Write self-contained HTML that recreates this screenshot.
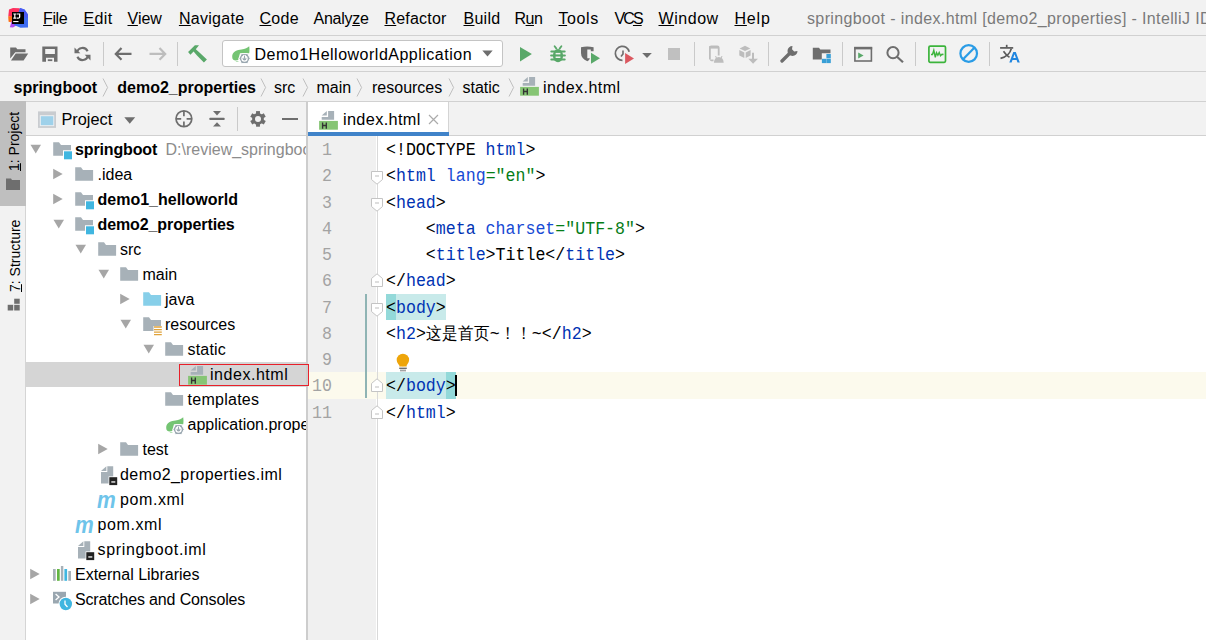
<!DOCTYPE html>
<html><head><meta charset="utf-8"><style>
html,body{margin:0;padding:0;}
body{width:1206px;height:640px;position:relative;overflow:hidden;background:#f2f2f2;font-family:'Liberation Sans', sans-serif;}
u{text-decoration-thickness:1px;text-underline-offset:1px}
</style></head><body>
<div style="position:absolute;left:0px;top:35px;width:1206px;height:1px;background:#d1d1d1;"></div><svg style="position:absolute;left:4px;top:4px" width="30" height="30" viewBox="0 0 30 30">
<polygon points="5,5.5 9,4 15.5,4.2 18,8 9,13 4.3,12.3" fill="#fe2f5e"/>
<polygon points="4.2,12.3 8.3,12.3 8.3,18.6 4.6,17.7" fill="#fe6f17"/>
<polygon points="8.3,15 13,21 9,23.5 5.8,23.3" fill="#b04af0"/>
<polygon points="16,4 20.5,5.5 24,10.5 24,23.5 16.5,23.8 10,21" fill="#3e6cf1"/>
<polygon points="16,4 20.5,5.5 24,10.5 24,14 16,12" fill="#4a5af4"/>
<rect x="8" y="8" width="12" height="12" fill="#000"/>
<path d="M9.3,9.5 H12.3 V10.6 H11.4 V13.6 H12.3 V14.7 H9.3 V13.6 H10.2 V10.6 H9.3 Z" fill="#fff"/>
<path d="M12.8,9.5 H16.3 V13 Q16.3,14.8 14.3,14.8 H12.8 V13.6 H14.3 Q15,13.6 15,13 V10.6 H12.8 Z" fill="#fff"/>
<rect x="9.2" y="17" width="5.3" height="1.1" fill="#fff"/>
</svg><div style="position:absolute;left:43.1px;top:11.46px;font-family:'Liberation Sans', sans-serif;font-size:16px;line-height:16px;color:#000;font-weight:400;white-space:pre;letter-spacing:-0.45px"><u style="text-decoration-thickness:1px;text-underline-offset:1px">F</u>ile</div><div style="position:absolute;left:83.6px;top:11.46px;font-family:'Liberation Sans', sans-serif;font-size:16px;line-height:16px;color:#000;font-weight:400;white-space:pre;letter-spacing:0.3px"><u style="text-decoration-thickness:1px;text-underline-offset:1px">E</u>dit</div><div style="position:absolute;left:127.5px;top:11.46px;font-family:'Liberation Sans', sans-serif;font-size:16px;line-height:16px;color:#000;font-weight:400;white-space:pre;letter-spacing:0px"><u style="text-decoration-thickness:1px;text-underline-offset:1px">V</u>iew</div><div style="position:absolute;left:178.9px;top:11.46px;font-family:'Liberation Sans', sans-serif;font-size:16px;line-height:16px;color:#000;font-weight:400;white-space:pre;letter-spacing:0.3px"><u style="text-decoration-thickness:1px;text-underline-offset:1px">N</u>avigate</div><div style="position:absolute;left:259.5px;top:11.46px;font-family:'Liberation Sans', sans-serif;font-size:16px;line-height:16px;color:#000;font-weight:400;white-space:pre;letter-spacing:0.27px"><u style="text-decoration-thickness:1px;text-underline-offset:1px">C</u>ode</div><div style="position:absolute;left:313.5px;top:11.46px;font-family:'Liberation Sans', sans-serif;font-size:16px;line-height:16px;color:#000;font-weight:400;white-space:pre;letter-spacing:-0.27px">Analy<u style="text-decoration-thickness:1px;text-underline-offset:1px">z</u>e</div><div style="position:absolute;left:384.5px;top:11.46px;font-family:'Liberation Sans', sans-serif;font-size:16px;line-height:16px;color:#000;font-weight:400;white-space:pre;letter-spacing:0.2px"><u style="text-decoration-thickness:1px;text-underline-offset:1px">R</u>efactor</div><div style="position:absolute;left:463.5px;top:11.46px;font-family:'Liberation Sans', sans-serif;font-size:16px;line-height:16px;color:#000;font-weight:400;white-space:pre;letter-spacing:0.27px"><u style="text-decoration-thickness:1px;text-underline-offset:1px">B</u>uild</div><div style="position:absolute;left:514.5px;top:11.46px;font-family:'Liberation Sans', sans-serif;font-size:16px;line-height:16px;color:#000;font-weight:400;white-space:pre;letter-spacing:-0.5px">R<u style="text-decoration-thickness:1px;text-underline-offset:1px">u</u>n</div><div style="position:absolute;left:558.5px;top:11.46px;font-family:'Liberation Sans', sans-serif;font-size:16px;line-height:16px;color:#000;font-weight:400;white-space:pre;letter-spacing:0.6px"><u style="text-decoration-thickness:1px;text-underline-offset:1px">T</u>ools</div><div style="position:absolute;left:614.5px;top:11.46px;font-family:'Liberation Sans', sans-serif;font-size:16px;line-height:16px;color:#000;font-weight:400;white-space:pre;letter-spacing:-1.9px">VC<u style="text-decoration-thickness:1px;text-underline-offset:1px">S</u></div><div style="position:absolute;left:658.5px;top:11.46px;font-family:'Liberation Sans', sans-serif;font-size:16px;line-height:16px;color:#000;font-weight:400;white-space:pre;letter-spacing:0.54px"><u style="text-decoration-thickness:1px;text-underline-offset:1px">W</u>indow</div><div style="position:absolute;left:734.5px;top:11.46px;font-family:'Liberation Sans', sans-serif;font-size:16px;line-height:16px;color:#000;font-weight:400;white-space:pre;letter-spacing:0.8px"><u style="text-decoration-thickness:1px;text-underline-offset:1px">H</u>elp</div><div style="position:absolute;left:807px;top:11.46px;font-family:'Liberation Sans', sans-serif;font-size:16px;line-height:16px;color:#7a7a7a;font-weight:400;white-space:pre;letter-spacing:0.37px">springboot - index.html [demo2_properties] - IntelliJ IDEA</div><div style="position:absolute;left:0px;top:71px;width:1206px;height:1px;background:#d1d1d1;"></div><svg style="position:absolute;left:10px;top:47px" width="19" height="14" viewBox="0 0 19 14"><path d="M0.2,0.5 H6 L7.3,2.2 H15.5 V5.2 H5.3 L0.2,11.5 Z" fill="#6e6e6e"/><path d="M1,13.4 L5.7,6.6 H18.2 L13.6,13.4 Z" fill="#6e6e6e"/></svg><svg style="position:absolute;left:42px;top:46px" width="16" height="16" viewBox="0 0 16 16"><path d="M0.3,0.5 H15.5 V15.8 H12 V11.7 H4 V15.8 H0.3 Z M3.2,3 V8 H12.9 V3 Z" fill="#6e6e6e" fill-rule="evenodd"/><rect x="5.8" y="13.3" width="4.5" height="1.8" fill="#6e6e6e"/></svg><svg style="position:absolute;left:74px;top:46px" width="17" height="16" viewBox="0 0 17 16"><path d="M3,6.5 A5.6,5.6 0 0 1 13.6,5.2" stroke="#6e6e6e" stroke-width="2.1" fill="none"/><path d="M14,9.5 A5.6,5.6 0 0 1 3.4,10.8" stroke="#6e6e6e" stroke-width="2.1" fill="none"/><polygon points="0.5,1.5 0.5,7.3 6.3,7.3" fill="#6e6e6e"/><polygon points="16.5,14.5 16.5,8.7 10.7,8.7" fill="#6e6e6e"/></svg><div style="position:absolute;left:103px;top:42px;width:1px;height:24px;background:#cacaca;"></div><svg style="position:absolute;left:114px;top:47px" width="19" height="14" viewBox="0 0 19 14"><path d="M7.5,1 L1.8,6.9 L7.5,12.8 M1.8,6.9 H17.5" stroke="#6e6e6e" stroke-width="2.2" fill="none"/></svg><svg style="position:absolute;left:148px;top:47px" width="19" height="14" viewBox="0 0 19 14"><path d="M11.5,1 L17.2,6.9 L11.5,12.8 M17.2,6.9 H1.5" stroke="#bdbdbd" stroke-width="2.2" fill="none"/></svg><div style="position:absolute;left:177px;top:42px;width:1px;height:24px;background:#cacaca;"></div><svg style="position:absolute;left:184px;top:42px" width="28" height="24" viewBox="0 0 28 24"><path d="M4.1,10.1 L10.9,3.2 L15,3.2 L11.8,7.3 L16,11 L22.9,17.6 L19.9,20.4 L13,13.5 L9.6,9.4 L6.4,12.7 Z" fill="#59a869"/></svg><div style="position:absolute;left:222px;top:40px;width:281px;height:27px;background:#fff;box-sizing:border-box;border:1px solid #c4c4c4;border-radius:3px;"></div><svg style="position:absolute;left:230.5px;top:46px" width="21" height="20" viewBox="0 0 21 20"><path d="M1.2,11 C1,5.5 6.5,4 10.5,3.6 C14,3.2 16.8,1.8 18.2,0.3 C18.6,3 18.6,5.5 18.2,7.2 L9,7.3 L7.8,11.6 L7.2,14 C5,14.6 1.3,15 1.2,11 Z" fill="#74c473"/>
<path d="M4.5,15.2 C5.5,14.9 7,14.9 7.8,15.2 C7,15.6 5.5,15.6 4.5,15.2 Z" fill="#74c473"/>
<polygon points="10.4,7.6 16.6,7.6 19.2,12.3 16.6,17.6 10.4,17.6 8,12.3" fill="#9aa7b0" stroke="#fff" stroke-width="1"/>
<circle cx="13.5" cy="12.6" r="3.2" fill="#fff"/><circle cx="13.5" cy="12.6" r="1.9" fill="#9aa7b0"/>
<rect x="12.2" y="9" width="2.6" height="3.4" fill="#fff"/><rect x="13" y="9.6" width="1" height="3.2" fill="#9aa7b0"/></svg><div style="position:absolute;left:254.5px;top:46.96px;font-family:'Liberation Sans', sans-serif;font-size:16px;line-height:16px;color:#000;font-weight:400;white-space:pre;letter-spacing:0.5px">Demo1HelloworldApplication</div><svg style="position:absolute;left:482px;top:50px" width="11" height="7" viewBox="0 0 11 7"><polygon points="0.3,0.5 10.7,0.5 5.5,6.5" fill="#6e6e6e"/></svg><svg style="position:absolute;left:519px;top:46px" width="14" height="16" viewBox="0 0 14 16"><polygon points="1,0.9 1,15.4 12.9,7.9" fill="#59a869"/></svg><svg style="position:absolute;left:549px;top:45px" width="18" height="18" viewBox="0 0 18 18"><path d="M5.6,1.3 L7.4,3.6 M12.4,1.3 L10.6,3.6" stroke="#59a869" stroke-width="1.8" stroke-linecap="round"/>
<ellipse cx="9" cy="10.6" rx="5.1" ry="6.6" fill="#59a869"/>
<path d="M2.3,6.4 H15.7 M2.1,10.5 H15.9 M2.3,14.6 H15.7" stroke="#59a869" stroke-width="2" stroke-linecap="round"/>
<rect x="6.6" y="7.9" width="4.8" height="1.5" fill="#f2f2f2"/><rect x="6.6" y="11.5" width="4.8" height="1.5" fill="#f2f2f2"/></svg><svg style="position:absolute;left:576px;top:42px" width="26" height="24" viewBox="0 0 26 24"><path d="M5,5.3 Q11,3.6 17.6,5.3 V9.3 H14.8 V7.6 H11.3 V16.2 H13.9 Q13.5,18 11.4,19.3 Q5,16.5 5,11 Z" fill="#6e6e6e"/>
<polygon points="15,10.8 15,21.8 24,16.3" fill="#59a869"/></svg><svg style="position:absolute;left:614px;top:45px" width="21" height="20" viewBox="0 0 21 20"><path d="M15.2,6.8 A7,7 0 1 0 8.5,15.3" stroke="#6e6e6e" stroke-width="1.7" fill="none"/>
<path d="M9,5.5 V9 L7,11.5" stroke="#6e6e6e" stroke-width="1.6" fill="none"/>
<polygon points="11.1,7.9 11.1,18.9 20,13.4" fill="#db5860"/></svg><svg style="position:absolute;left:642px;top:52px" width="10" height="6" viewBox="0 0 10 6"><polygon points="0.2,0.9 9.8,0.9 5,5.9" fill="#6e6e6e"/></svg><div style="position:absolute;left:668px;top:48px;width:12px;height:12px;background:#c0c0c0;"></div><div style="position:absolute;left:694px;top:42px;width:1px;height:24px;background:#cacaca;"></div><svg style="position:absolute;left:704px;top:42px" width="60" height="24" viewBox="0 0 60 24"><path d="M5.9,17.6 V5.8 Q5.9,4.3 7.4,4.3 H13.2 Q14.7,4.3 14.7,5.8 V13.5" stroke="#bdbdbd" stroke-width="1.8" fill="none"/>
<rect x="5" y="4.3" width="9.7" height="2.3" fill="#bdbdbd"/>
<path d="M5.9,17.6 Q5.9,19.2 7.4,19.2 H9.5 V17.5 H5.9 Z" fill="#bdbdbd"/>
<path d="M9.9,20.7 Q10.3,15 14.8,14.9 Q19.3,15 19.7,20.7 Z" fill="#bdbdbd"/>
<path d="M11.6,14 L12.4,16 M18,14 L17.2,16" stroke="#bdbdbd" stroke-width="1"/>
<polygon points="41,3.8 46.3,6.4 41,9.1 35.6,6.4" fill="#bdbdbd"/>
<polygon points="35.3,7.9 40.3,10.5 40.3,16.1 35.3,13.6" fill="#bdbdbd"/>
<polygon points="41.7,10.5 46.6,7.9 46.6,13.6 41.7,16.1" fill="#bdbdbd"/>
<path d="M49,10.8 V17.5" stroke="#bdbdbd" stroke-width="2"/><polygon points="44.3,16.8 53.9,16.8 49.1,21.8" fill="#bdbdbd"/></svg><div style="position:absolute;left:768px;top:42px;width:1px;height:24px;background:#cacaca;"></div><svg style="position:absolute;left:780px;top:45px" width="19" height="18" viewBox="0 0 19 18"><path d="M2,16 L10,8" stroke="#6e6e6e" stroke-width="3.3" stroke-linecap="round"/>
<path d="M12.5,1 A5,5 0 1 0 17.5,6 L14.2,6.5 L12,4.3 Z" fill="#6e6e6e"/></svg><svg style="position:absolute;left:812px;top:47px" width="20" height="17" viewBox="0 0 20 17"><path d="M0.8,0.8 H7 L8.3,2.6 H18.5 V6.3 H9.8 V12.4 H0.8 Z" fill="#6e6e6e"/>
<rect x="14.4" y="7" width="4.4" height="4.3" fill="#389fd6"/><rect x="9.9" y="11.8" width="4.4" height="4.3" fill="#389fd6"/><rect x="14.4" y="11.8" width="4.4" height="4.3" fill="#389fd6"/></svg><div style="position:absolute;left:842px;top:42px;width:1px;height:24px;background:#cacaca;"></div><svg style="position:absolute;left:853px;top:46px" width="20" height="16" viewBox="0 0 20 16"><rect x="1.9" y="2" width="16.5" height="13" fill="none" stroke="#6e6e6e" stroke-width="1.6"/><rect x="1.1" y="0.8" width="18.1" height="2.6" fill="#6e6e6e"/>
<polygon points="5.2,6.4 5.2,12.4 10.6,9.4" fill="#59a869"/></svg><svg style="position:absolute;left:886px;top:45px" width="19" height="18" viewBox="0 0 19 18"><circle cx="7" cy="7.7" r="5.6" stroke="#6e6e6e" stroke-width="2" fill="none"/><path d="M11,11.8 L17,17.2" stroke="#6e6e6e" stroke-width="2.2"/></svg><div style="position:absolute;left:915px;top:42px;width:1px;height:24px;background:#cacaca;"></div><svg style="position:absolute;left:927px;top:45px" width="20" height="19" viewBox="0 0 20 19"><rect x="1.9" y="1.1" width="16.6" height="16.3" rx="1.3" fill="none" stroke="#3cb43c" stroke-width="1.7"/>
<path d="M4,9.5 L5.5,9.5 L6.8,5.3 L8.3,12.3 L9.5,7.7 L10.9,10.3 L12.2,7.5 L13.5,10.8 L15,9.2 L16.5,9.5" stroke="#3cb43c" stroke-width="1.4" fill="none"/></svg><svg style="position:absolute;left:959px;top:44px" width="20" height="20" viewBox="0 0 20 20"><circle cx="9.7" cy="9.5" r="8.3" stroke="#2a9ce6" stroke-width="2.2" fill="none"/><path d="M4.3,15 L15.1,4" stroke="#2a9ce6" stroke-width="2.2"/></svg><div style="position:absolute;left:989px;top:42px;width:1px;height:24px;background:#cacaca;"></div><svg style="position:absolute;left:996px;top:42px" width="26" height="24" viewBox="0 0 26 24"><path d="M10.7,2.8 V5" stroke="#5a5a5a" stroke-width="1.7"/>
<path d="M4.1,5.9 H17.2" stroke="#5a5a5a" stroke-width="1.7"/>
<path d="M15.3,6.6 C14,12 10,15 4.5,16.4" stroke="#5a5a5a" stroke-width="1.7" fill="none"/>
<path d="M7.5,9.3 C9.5,12 11,14 13.5,15.3" stroke="#5a5a5a" stroke-width="1.7" fill="none"/>
<path d="M13.3,20.6 L17.3,10.1 H19.8 L23.8,20.6 H21.5 L20.6,18 H16.5 L15.6,20.6 Z M17.2,16.1 H19.9 L18.55,12.2 Z" fill="#2086e0" fill-rule="evenodd"/></svg><div style="position:absolute;left:0px;top:101px;width:1206px;height:1px;background:#d1d1d1;"></div><div style="position:absolute;left:13.5px;top:80.46px;font-family:'Liberation Sans', sans-serif;font-size:16px;line-height:16px;color:#000;font-weight:700;white-space:pre;">springboot</div><svg style="position:absolute;left:102px;top:78px" width="7" height="19" viewBox="0 0 7 19"><path d="M1,0.5 L5.6,9.5 L1,18.5" stroke="#bfbfbf" stroke-width="1" fill="none"/></svg><div style="position:absolute;left:117.3px;top:80.46px;font-family:'Liberation Sans', sans-serif;font-size:16px;line-height:16px;color:#000;font-weight:700;white-space:pre;">demo2_properties</div><svg style="position:absolute;left:260px;top:78px" width="7" height="19" viewBox="0 0 7 19"><path d="M1,0.5 L5.6,9.5 L1,18.5" stroke="#bfbfbf" stroke-width="1" fill="none"/></svg><div style="position:absolute;left:274px;top:80.46px;font-family:'Liberation Sans', sans-serif;font-size:16px;line-height:16px;color:#000;font-weight:400;white-space:pre;">src</div><svg style="position:absolute;left:302px;top:78px" width="7" height="19" viewBox="0 0 7 19"><path d="M1,0.5 L5.6,9.5 L1,18.5" stroke="#bfbfbf" stroke-width="1" fill="none"/></svg><div style="position:absolute;left:316.5px;top:80.46px;font-family:'Liberation Sans', sans-serif;font-size:16px;line-height:16px;color:#000;font-weight:400;white-space:pre;">main</div><svg style="position:absolute;left:356px;top:78px" width="7" height="19" viewBox="0 0 7 19"><path d="M1,0.5 L5.6,9.5 L1,18.5" stroke="#bfbfbf" stroke-width="1" fill="none"/></svg><div style="position:absolute;left:372px;top:80.46px;font-family:'Liberation Sans', sans-serif;font-size:16px;line-height:16px;color:#000;font-weight:400;white-space:pre;">resources</div><svg style="position:absolute;left:448px;top:78px" width="7" height="19" viewBox="0 0 7 19"><path d="M1,0.5 L5.6,9.5 L1,18.5" stroke="#bfbfbf" stroke-width="1" fill="none"/></svg><div style="position:absolute;left:462.5px;top:80.46px;font-family:'Liberation Sans', sans-serif;font-size:16px;line-height:16px;color:#000;font-weight:400;white-space:pre;">static</div><svg style="position:absolute;left:507.5px;top:78px" width="7" height="19" viewBox="0 0 7 19"><path d="M1,0.5 L5.6,9.5 L1,18.5" stroke="#bfbfbf" stroke-width="1" fill="none"/></svg><svg style="position:absolute;left:519px;top:74.1px" width="22" height="24" viewBox="0 0 22 24"><path d="M10.1,3 H16.1 V11.8 H3.7 V9 H10.1 Z" fill="#a7b1b8"/><path d="M3.7,7.6 L8.8,3.1 V7.6 Z" fill="#a7b1b8"/>
<rect x="1.1" y="12.9" width="18.8" height="8.8" fill="#86c574"/>
<path d="M4.6,14.4 V20.8 M8.3,14.4 V20.8 M4.6,17.5 H8.3" stroke="#333" stroke-width="1.35"/></svg><div style="position:absolute;left:543px;top:80.46px;font-family:'Liberation Sans', sans-serif;font-size:16px;line-height:16px;color:#000;font-weight:400;white-space:pre;letter-spacing:0.45px">index.html</div><div style="position:absolute;left:0px;top:102px;width:25px;height:538px;background:#f2f2f2;"></div><div style="position:absolute;left:25px;top:102px;width:1px;height:538px;background:#d5d5d5;"></div><div style="position:absolute;left:0px;top:101px;width:26px;height:105px;background:#bfbfbf;"></div><div style="position:absolute;left:7px;top:171px;width:80px;height:14px;transform-origin:0 0;transform:rotate(-90deg);font-family:'Liberation Sans', sans-serif;font-size:14px;line-height:14px;white-space:pre;color:#000"><u>1</u>: Project</div><svg style="position:absolute;left:5px;top:177px" width="16" height="14" viewBox="0 0 16 14"><path d="M1,1.5 H6 L7,3 H15 V13 H1 Z" fill="#6e6e6e"/></svg><div style="position:absolute;left:7.5px;top:292px;width:90px;height:14px;transform-origin:0 0;transform:rotate(-90deg);font-family:'Liberation Sans', sans-serif;font-size:14px;line-height:14px;white-space:pre;color:#000"><u>7</u>: Structure</div><svg style="position:absolute;left:6px;top:297px" width="16" height="15" viewBox="0 0 16 15"><rect x="8.2" y="1.7" width="5.5" height="5.1" fill="#6e6e6e"/><rect x="1.7" y="7.8" width="5.5" height="5.7" fill="#6e6e6e"/><rect x="8.2" y="7.8" width="5.5" height="5.7" fill="#6e6e6e"/></svg><div style="position:absolute;left:26px;top:102px;width:280px;height:33px;background:#f2f2f2;"></div><div style="position:absolute;left:26px;top:135px;width:280px;height:1px;background:#d1d1d1;"></div><svg style="position:absolute;left:37px;top:111px" width="20" height="18" viewBox="0 0 20 18"><rect x="1" y="0.4" width="18" height="16.5" fill="#c9ccd0"/><rect x="2.8" y="4.2" width="14.4" height="10.9" fill="#eef0f2"/><rect x="3.8" y="5.2" width="12.5" height="9" fill="#9ed1ea"/></svg><div style="position:absolute;left:61.5px;top:111.20px;font-family:'Liberation Sans', sans-serif;font-size:16.3px;line-height:16.3px;color:#000;font-weight:400;white-space:pre;">Project</div><svg style="position:absolute;left:123px;top:116px" width="13" height="9" viewBox="0 0 13 9"><polygon points="1.3,1.2 12.2,1.2 6.75,7.8" fill="#6e6e6e"/></svg><svg style="position:absolute;left:174px;top:109px" width="20" height="20" viewBox="0 0 20 20"><circle cx="9.9" cy="9.8" r="7.9" stroke="#6e6e6e" stroke-width="1.7" fill="none"/><path d="M9.9,2 V7.2 M9.9,12.4 V17.6 M2,9.8 H7.2 M12.6,9.8 H17.8" stroke="#6e6e6e" stroke-width="1.7"/></svg><svg style="position:absolute;left:208px;top:109px" width="18" height="20" viewBox="0 0 18 20"><polygon points="5,2 13,2 9,6.5" fill="#6e6e6e"/><rect x="1.3" y="8.8" width="15.4" height="2.2" rx="0.8" fill="#6e6e6e"/><polygon points="5,17.6 13,17.6 9,13.2" fill="#6e6e6e"/></svg><div style="position:absolute;left:237px;top:107px;width:1px;height:24px;background:#cacaca;"></div><svg style="position:absolute;left:249px;top:110px" width="18" height="18" viewBox="0 0 18 18"><g transform="translate(9,8.9)"><circle r="5.9" fill="#6e6e6e"/><rect x="-1.95" y="-7.8" width="3.9" height="4" fill="#6e6e6e" transform="rotate(0)"/><rect x="-1.95" y="-7.8" width="3.9" height="4" fill="#6e6e6e" transform="rotate(60)"/><rect x="-1.95" y="-7.8" width="3.9" height="4" fill="#6e6e6e" transform="rotate(120)"/><rect x="-1.95" y="-7.8" width="3.9" height="4" fill="#6e6e6e" transform="rotate(180)"/><rect x="-1.95" y="-7.8" width="3.9" height="4" fill="#6e6e6e" transform="rotate(240)"/><rect x="-1.95" y="-7.8" width="3.9" height="4" fill="#6e6e6e" transform="rotate(300)"/><circle r="3" fill="#f2f2f2"/></g></svg><div style="position:absolute;left:282px;top:118px;width:16px;height:2px;background:#6e6e6e;"></div><div style="position:absolute;left:306px;top:102px;width:2px;height:538px;background:#cdcdcd;"></div><div style="position:absolute;left:26px;top:136px;width:280px;height:504px;background:#fff;"></div><div style="position:absolute;left:26px;top:362px;width:280px;height:25px;background:#d5d5d5;"></div><div style="position:absolute;left:0;top:0;width:306px;height:640px;overflow:hidden"><svg style="position:absolute;left:30.0px;top:144px" width="12" height="10" viewBox="0 0 12 10"><polygon points="0.5,0.7 11,0.7 5.75,9.5" fill="#a6a6a6"/></svg><svg style="position:absolute;left:52.5px;top:142.3px" width="20" height="19" viewBox="0 0 20 19"><path d="M0.2,0.3 H6 L8,3 H18 V8.2 H10 V13.8 H0.2 Z" fill="#a7b1b8"/><rect x="11" y="9.3" width="8" height="8" fill="#40b6e0"/></svg><div style="position:absolute;left:75.0px;top:141.96px;font-family:'Liberation Sans', sans-serif;font-size:16px;line-height:16px;color:#000;font-weight:700;white-space:pre;letter-spacing:-0.14px">springboot</div><div style="position:absolute;left:165.5px;top:141.96px;font-family:'Liberation Sans', sans-serif;font-size:16px;line-height:16px;color:#8c8c8c;font-weight:400;white-space:pre;">D:\review_springboot</div><svg style="position:absolute;left:52.5px;top:168px" width="10" height="12" viewBox="0 0 10 12"><polygon points="0.2,0.8 9.7,6 0.2,11.2" fill="#a6a6a6"/></svg><svg style="position:absolute;left:75.0px;top:167.3px" width="19" height="15" viewBox="0 0 19 15"><path d="M0.2,0.3 H6 L8,3 H18.1 V13.8 H0.2 Z" fill="#a7b1b8"/></svg><div style="position:absolute;left:97.5px;top:166.96px;font-family:'Liberation Sans', sans-serif;font-size:16px;line-height:16px;color:#000;font-weight:400;white-space:pre;letter-spacing:0px">.idea</div><svg style="position:absolute;left:52.5px;top:193px" width="10" height="12" viewBox="0 0 10 12"><polygon points="0.2,0.8 9.7,6 0.2,11.2" fill="#a6a6a6"/></svg><svg style="position:absolute;left:75.0px;top:192.3px" width="20" height="19" viewBox="0 0 20 19"><path d="M0.2,0.3 H6 L8,3 H18 V8.2 H10 V13.8 H0.2 Z" fill="#a7b1b8"/><rect x="11" y="9.3" width="8" height="8" fill="#40b6e0"/></svg><div style="position:absolute;left:97.5px;top:191.96px;font-family:'Liberation Sans', sans-serif;font-size:16px;line-height:16px;color:#000;font-weight:700;white-space:pre;letter-spacing:0px">demo1_helloworld</div><svg style="position:absolute;left:52.5px;top:219px" width="12" height="10" viewBox="0 0 12 10"><polygon points="0.5,0.7 11,0.7 5.75,9.5" fill="#a6a6a6"/></svg><svg style="position:absolute;left:75.0px;top:217.3px" width="20" height="19" viewBox="0 0 20 19"><path d="M0.2,0.3 H6 L8,3 H18 V8.2 H10 V13.8 H0.2 Z" fill="#a7b1b8"/><rect x="11" y="9.3" width="8" height="8" fill="#40b6e0"/></svg><div style="position:absolute;left:97.5px;top:216.96px;font-family:'Liberation Sans', sans-serif;font-size:16px;line-height:16px;color:#000;font-weight:700;white-space:pre;letter-spacing:-0.1px">demo2_properties</div><svg style="position:absolute;left:75.0px;top:244px" width="12" height="10" viewBox="0 0 12 10"><polygon points="0.5,0.7 11,0.7 5.75,9.5" fill="#a6a6a6"/></svg><svg style="position:absolute;left:97.5px;top:242.3px" width="19" height="15" viewBox="0 0 19 15"><path d="M0.2,0.3 H6 L8,3 H18.1 V13.8 H0.2 Z" fill="#a7b1b8"/></svg><div style="position:absolute;left:120.0px;top:241.96px;font-family:'Liberation Sans', sans-serif;font-size:16px;line-height:16px;color:#000;font-weight:400;white-space:pre;letter-spacing:0px">src</div><svg style="position:absolute;left:97.5px;top:269px" width="12" height="10" viewBox="0 0 12 10"><polygon points="0.5,0.7 11,0.7 5.75,9.5" fill="#a6a6a6"/></svg><svg style="position:absolute;left:120.0px;top:267.3px" width="19" height="15" viewBox="0 0 19 15"><path d="M0.2,0.3 H6 L8,3 H18.1 V13.8 H0.2 Z" fill="#a7b1b8"/></svg><div style="position:absolute;left:142.5px;top:266.96px;font-family:'Liberation Sans', sans-serif;font-size:16px;line-height:16px;color:#000;font-weight:400;white-space:pre;letter-spacing:0px">main</div><svg style="position:absolute;left:120.0px;top:293px" width="10" height="12" viewBox="0 0 10 12"><polygon points="0.2,0.8 9.7,6 0.2,11.2" fill="#a6a6a6"/></svg><svg style="position:absolute;left:142.5px;top:292.3px" width="19" height="15" viewBox="0 0 19 15"><path d="M0.2,0.3 H6 L8,3 H18.1 V13.8 H0.2 Z" fill="#87cfe9"/></svg><div style="position:absolute;left:165.0px;top:291.96px;font-family:'Liberation Sans', sans-serif;font-size:16px;line-height:16px;color:#000;font-weight:400;white-space:pre;letter-spacing:0px">java</div><svg style="position:absolute;left:120.0px;top:319px" width="12" height="10" viewBox="0 0 12 10"><polygon points="0.5,0.7 11,0.7 5.75,9.5" fill="#a6a6a6"/></svg><svg style="position:absolute;left:142.5px;top:317.3px" width="20" height="19" viewBox="0 0 20 19"><path d="M0.2,0.3 H6 L8,3 H18 V9 H10.5 V14 H0.2 Z" fill="#a7b1b8"/>
<path d="M11,10 H18.8 M11,12.6 H18.8 M11,15.2 H18.8 M11,17.7 H18.8" stroke="#e0a33b" stroke-width="1.3"/></svg><div style="position:absolute;left:165.0px;top:316.96px;font-family:'Liberation Sans', sans-serif;font-size:16px;line-height:16px;color:#000;font-weight:400;white-space:pre;letter-spacing:0px">resources</div><svg style="position:absolute;left:142.5px;top:344px" width="12" height="10" viewBox="0 0 12 10"><polygon points="0.5,0.7 11,0.7 5.75,9.5" fill="#a6a6a6"/></svg><svg style="position:absolute;left:165.0px;top:342.3px" width="19" height="15" viewBox="0 0 19 15"><path d="M0.2,0.3 H6 L8,3 H18.1 V13.8 H0.2 Z" fill="#a7b1b8"/></svg><div style="position:absolute;left:187.5px;top:341.96px;font-family:'Liberation Sans', sans-serif;font-size:16px;line-height:16px;color:#000;font-weight:400;white-space:pre;letter-spacing:0.2px">static</div><svg style="position:absolute;left:186.5px;top:363.1px" width="22" height="24" viewBox="0 0 22 24"><path d="M10.1,3 H16.1 V11.8 H3.7 V9 H10.1 Z" fill="#a7b1b8"/><path d="M3.7,7.6 L8.8,3.1 V7.6 Z" fill="#a7b1b8"/>
<rect x="1.1" y="12.9" width="18.8" height="8.8" fill="#86c574"/>
<path d="M4.6,14.4 V20.8 M8.3,14.4 V20.8 M4.6,17.5 H8.3" stroke="#333" stroke-width="1.35"/></svg><div style="position:absolute;left:210.0px;top:366.96px;font-family:'Liberation Sans', sans-serif;font-size:16px;line-height:16px;color:#000;font-weight:400;white-space:pre;letter-spacing:0.54px">index.html</div><svg style="position:absolute;left:165.0px;top:392.3px" width="19" height="15" viewBox="0 0 19 15"><path d="M0.2,0.3 H6 L8,3 H18.1 V13.8 H0.2 Z" fill="#a7b1b8"/></svg><div style="position:absolute;left:187.5px;top:391.96px;font-family:'Liberation Sans', sans-serif;font-size:16px;line-height:16px;color:#000;font-weight:400;white-space:pre;letter-spacing:0.27px">templates</div><svg style="position:absolute;left:164.5px;top:416.5px" width="21" height="20" viewBox="0 0 21 20"><path d="M1.2,11 C1,5.5 6.5,4 10.5,3.6 C14,3.2 16.8,1.8 18.2,0.3 C18.6,3 18.6,5.5 18.2,7.2 L9,7.3 L7.8,11.6 L7.2,14 C5,14.6 1.3,15 1.2,11 Z" fill="#74c473"/>
<path d="M4.5,15.2 C5.5,14.9 7,14.9 7.8,15.2 C7,15.6 5.5,15.6 4.5,15.2 Z" fill="#74c473"/>
<polygon points="10.4,7.6 16.6,7.6 19.2,12.3 16.6,17.6 10.4,17.6 8,12.3" fill="#9aa7b0" stroke="#fff" stroke-width="1"/>
<circle cx="13.5" cy="12.6" r="3.2" fill="#fff"/><circle cx="13.5" cy="12.6" r="1.9" fill="#9aa7b0"/>
<rect x="12.2" y="9" width="2.6" height="3.4" fill="#fff"/><rect x="13" y="9.6" width="1" height="3.2" fill="#9aa7b0"/></svg><div style="position:absolute;left:187.5px;top:416.96px;font-family:'Liberation Sans', sans-serif;font-size:16px;line-height:16px;color:#000;font-weight:400;white-space:pre;letter-spacing:0px">application.properties</div><svg style="position:absolute;left:97.5px;top:443px" width="10" height="12" viewBox="0 0 10 12"><polygon points="0.2,0.8 9.7,6 0.2,11.2" fill="#a6a6a6"/></svg><svg style="position:absolute;left:120.0px;top:442.3px" width="19" height="15" viewBox="0 0 19 15"><path d="M0.2,0.3 H6 L8,3 H18.1 V13.8 H0.2 Z" fill="#a7b1b8"/></svg><div style="position:absolute;left:142.5px;top:441.96px;font-family:'Liberation Sans', sans-serif;font-size:16px;line-height:16px;color:#000;font-weight:400;white-space:pre;letter-spacing:0px">test</div><svg style="position:absolute;left:100.5px;top:466px" width="18" height="20" viewBox="0 0 18 20"><path d="M6.3,0.3 H12.2 V17.5 H0 V5.9 H6.3 Z" fill="#a7b1b8"/><path d="M0,5 L5.4,0.3 V5 Z" fill="#a7b1b8"/>
<rect x="7.6" y="10.4" width="9" height="9" fill="#fff"/><rect x="8.3" y="11.2" width="7.9" height="7.9" fill="#222"/><rect x="10.3" y="15.2" width="4" height="1.5" fill="#ddd"/></svg><div style="position:absolute;left:120.0px;top:466.96px;font-family:'Liberation Sans', sans-serif;font-size:16px;line-height:16px;color:#000;font-weight:400;white-space:pre;letter-spacing:0.42px">demo2_properties.iml</div><svg style="position:absolute;left:97.0px;top:493.5px" width="22" height="16" viewBox="0 0 22 16"><text x="0" y="13.6" font-family="Liberation Sans" font-style="italic" font-weight="700" font-size="24.5" fill="#6ec4ea" transform="scale(0.86,1)">m</text></svg><div style="position:absolute;left:120.0px;top:491.96px;font-family:'Liberation Sans', sans-serif;font-size:16px;line-height:16px;color:#000;font-weight:400;white-space:pre;letter-spacing:0.6px">pom.xml</div><svg style="position:absolute;left:74.5px;top:518.5px" width="22" height="16" viewBox="0 0 22 16"><text x="0" y="13.6" font-family="Liberation Sans" font-style="italic" font-weight="700" font-size="24.5" fill="#6ec4ea" transform="scale(0.86,1)">m</text></svg><div style="position:absolute;left:97.5px;top:516.96px;font-family:'Liberation Sans', sans-serif;font-size:16px;line-height:16px;color:#000;font-weight:400;white-space:pre;letter-spacing:0.6px">pom.xml</div><svg style="position:absolute;left:78.0px;top:541px" width="18" height="20" viewBox="0 0 18 20"><path d="M6.3,0.3 H12.2 V17.5 H0 V5.9 H6.3 Z" fill="#a7b1b8"/><path d="M0,5 L5.4,0.3 V5 Z" fill="#a7b1b8"/>
<rect x="7.6" y="10.4" width="9" height="9" fill="#fff"/><rect x="8.3" y="11.2" width="7.9" height="7.9" fill="#222"/><rect x="10.3" y="15.2" width="4" height="1.5" fill="#ddd"/></svg><div style="position:absolute;left:97.5px;top:541.96px;font-family:'Liberation Sans', sans-serif;font-size:16px;line-height:16px;color:#000;font-weight:400;white-space:pre;letter-spacing:0.67px">springboot.iml</div><svg style="position:absolute;left:30.0px;top:568px" width="10" height="12" viewBox="0 0 10 12"><polygon points="0.2,0.8 9.7,6 0.2,11.2" fill="#a6a6a6"/></svg><svg style="position:absolute;left:52.0px;top:566px" width="20" height="16" viewBox="0 0 20 16"><rect x="1" y="3" width="2.7" height="11.8" fill="#a7b1b8"/><rect x="5" y="3" width="2.7" height="11.8" fill="#62b543"/><rect x="8.9" y="0" width="2.4" height="14.8" fill="#a7b1b8"/><rect x="12.4" y="3" width="2.7" height="11.8" fill="#40b6e0"/><rect x="16.3" y="5" width="2.7" height="9.8" fill="#a7b1b8"/></svg><div style="position:absolute;left:75.0px;top:566.96px;font-family:'Liberation Sans', sans-serif;font-size:16px;line-height:16px;color:#000;font-weight:400;white-space:pre;letter-spacing:0px">External Libraries</div><svg style="position:absolute;left:30.0px;top:593px" width="10" height="12" viewBox="0 0 10 12"><polygon points="0.2,0.8 9.7,6 0.2,11.2" fill="#a6a6a6"/></svg><svg style="position:absolute;left:52.0px;top:591px" width="22" height="20" viewBox="0 0 22 20"><rect x="1" y="0.8" width="13" height="11.7" fill="#9aa7b0"/><path d="M3.6,3 L7,6 L3.6,9" stroke="#fff" stroke-width="1.3" fill="none"/>
<circle cx="13.8" cy="13" r="7.3" fill="#fff"/><circle cx="13.8" cy="13" r="6.2" fill="#40b6e0"/><path d="M13,9.5 V13.3 L15.5,16" stroke="#fff" stroke-width="1.3" fill="none"/></svg><div style="position:absolute;left:75.0px;top:591.96px;font-family:'Liberation Sans', sans-serif;font-size:16px;line-height:16px;color:#000;font-weight:400;white-space:pre;letter-spacing:-0.15px">Scratches and Consoles</div></div><div style="position:absolute;left:308px;top:102px;width:898px;height:33px;background:#f2f2f2;"></div><div style="position:absolute;left:308px;top:135px;width:898px;height:1px;background:#d1d1d1;"></div><div style="position:absolute;left:308px;top:102px;width:140px;height:33px;background:#fff;"></div><div style="position:absolute;left:448px;top:102px;width:1px;height:30px;background:#d4d4d4;"></div><div style="position:absolute;left:308px;top:132px;width:141px;height:4px;background:#4083c9;"></div><svg style="position:absolute;left:318px;top:108px" width="22" height="24" viewBox="0 0 22 24"><path d="M10.1,3 H16.1 V11.8 H3.7 V9 H10.1 Z" fill="#a7b1b8"/><path d="M3.7,7.6 L8.8,3.1 V7.6 Z" fill="#a7b1b8"/>
<rect x="1.1" y="12.9" width="18.8" height="8.8" fill="#86c574"/>
<path d="M4.6,14.4 V20.8 M8.3,14.4 V20.8 M4.6,17.5 H8.3" stroke="#333" stroke-width="1.35"/></svg><div style="position:absolute;left:343px;top:111.20px;font-family:'Liberation Sans', sans-serif;font-size:16.3px;line-height:16.3px;color:#000;font-weight:400;white-space:pre;letter-spacing:0.35px">index.html</div><svg style="position:absolute;left:428px;top:114px" width="11" height="11" viewBox="0 0 11 11"><path d="M1,1 L10,10 M10,1 L1,10" stroke="#ababab" stroke-width="1.2"/></svg><div style="position:absolute;left:308px;top:136px;width:898px;height:504px;background:#fff;"></div><div style="position:absolute;left:308px;top:136px;width:68px;height:504px;background:#f0f0f0;"></div><div style="position:absolute;left:308px;top:372px;width:898px;height:27px;background:#fcfaed;"></div><div style="position:absolute;left:377px;top:136px;width:1px;height:504px;background:#d9d9d9;"></div><div style="position:absolute;left:365px;top:294px;width:2px;height:104px;background:#8fb4b4;"></div><div style="position:absolute;left:322.04px;top:143.08px;font-family:'Liberation Mono', monospace;font-size:16.6px;line-height:16.6px;color:#a3a3a3;font-weight:400;white-space:pre;transform:scaleY(1.09);transform-origin:0 12.72px;">1</div><div style="position:absolute;left:322.04px;top:169.33px;font-family:'Liberation Mono', monospace;font-size:16.6px;line-height:16.6px;color:#a3a3a3;font-weight:400;white-space:pre;transform:scaleY(1.09);transform-origin:0 12.72px;">2</div><div style="position:absolute;left:322.04px;top:195.58px;font-family:'Liberation Mono', monospace;font-size:16.6px;line-height:16.6px;color:#a3a3a3;font-weight:400;white-space:pre;transform:scaleY(1.09);transform-origin:0 12.72px;">3</div><div style="position:absolute;left:322.04px;top:221.83px;font-family:'Liberation Mono', monospace;font-size:16.6px;line-height:16.6px;color:#a3a3a3;font-weight:400;white-space:pre;transform:scaleY(1.09);transform-origin:0 12.72px;">4</div><div style="position:absolute;left:322.04px;top:248.08px;font-family:'Liberation Mono', monospace;font-size:16.6px;line-height:16.6px;color:#a3a3a3;font-weight:400;white-space:pre;transform:scaleY(1.09);transform-origin:0 12.72px;">5</div><div style="position:absolute;left:322.04px;top:274.33px;font-family:'Liberation Mono', monospace;font-size:16.6px;line-height:16.6px;color:#a3a3a3;font-weight:400;white-space:pre;transform:scaleY(1.09);transform-origin:0 12.72px;">6</div><div style="position:absolute;left:322.04px;top:300.58px;font-family:'Liberation Mono', monospace;font-size:16.6px;line-height:16.6px;color:#a3a3a3;font-weight:400;white-space:pre;transform:scaleY(1.09);transform-origin:0 12.72px;">7</div><div style="position:absolute;left:322.04px;top:326.83px;font-family:'Liberation Mono', monospace;font-size:16.6px;line-height:16.6px;color:#a3a3a3;font-weight:400;white-space:pre;transform:scaleY(1.09);transform-origin:0 12.72px;">8</div><div style="position:absolute;left:322.04px;top:353.08px;font-family:'Liberation Mono', monospace;font-size:16.6px;line-height:16.6px;color:#a3a3a3;font-weight:400;white-space:pre;transform:scaleY(1.09);transform-origin:0 12.72px;">9</div><div style="position:absolute;left:312.08px;top:379.33px;font-family:'Liberation Mono', monospace;font-size:16.6px;line-height:16.6px;color:#a3a3a3;font-weight:400;white-space:pre;transform:scaleY(1.09);transform-origin:0 12.72px;">10</div><div style="position:absolute;left:312.08px;top:405.58px;font-family:'Liberation Mono', monospace;font-size:16.6px;line-height:16.6px;color:#a3a3a3;font-weight:400;white-space:pre;transform:scaleY(1.09);transform-origin:0 12.72px;">11</div><svg style="position:absolute;left:371px;top:171.25px" width="12" height="14" viewBox="0 0 12 14"><path d="M0.5,0.5 H11.5 V8.5 L6,13.2 L0.5,8.5 Z" fill="#fff" stroke="#c4c4c4" stroke-width="1"/><path d="M4,5 H8" stroke="#bdbdbd" stroke-width="1"/></svg><svg style="position:absolute;left:371px;top:197.5px" width="12" height="14" viewBox="0 0 12 14"><path d="M0.5,0.5 H11.5 V8.5 L6,13.2 L0.5,8.5 Z" fill="#fff" stroke="#c4c4c4" stroke-width="1"/><path d="M4,5 H8" stroke="#bdbdbd" stroke-width="1"/></svg><svg style="position:absolute;left:371px;top:273.25px" width="12" height="14" viewBox="0 0 12 14"><path d="M0.5,13.5 H11.5 V5.5 L6,0.8 L0.5,5.5 Z" fill="#fff" stroke="#c4c4c4" stroke-width="1"/><path d="M4,9 H8" stroke="#bdbdbd" stroke-width="1"/></svg><svg style="position:absolute;left:371px;top:302.5px" width="12" height="14" viewBox="0 0 12 14"><path d="M0.5,0.5 H11.5 V8.5 L6,13.2 L0.5,8.5 Z" fill="#fff" stroke="#c4c4c4" stroke-width="1"/><path d="M4,5 H8" stroke="#bdbdbd" stroke-width="1"/></svg><svg style="position:absolute;left:371px;top:378.25px" width="12" height="14" viewBox="0 0 12 14"><path d="M0.5,13.5 H11.5 V5.5 L6,0.8 L0.5,5.5 Z" fill="#fff" stroke="#c4c4c4" stroke-width="1"/><path d="M4,9 H8" stroke="#bdbdbd" stroke-width="1"/></svg><svg style="position:absolute;left:371px;top:404.5px" width="12" height="14" viewBox="0 0 12 14"><path d="M0.5,13.5 H11.5 V5.5 L6,0.8 L0.5,5.5 Z" fill="#fff" stroke="#c4c4c4" stroke-width="1"/><path d="M4,9 H8" stroke="#bdbdbd" stroke-width="1"/></svg><div style="position:absolute;left:386px;top:294px;width:59.760000000000005px;height:26px;background:#c8eaea;"></div><div style="position:absolute;left:386px;top:294px;width:9.96px;height:26px;background:#93d9d9;"></div><div style="position:absolute;left:386px;top:372px;width:69.72px;height:27px;background:#c8eaea;"></div><div style="position:absolute;left:445.76px;top:372px;width:9.96px;height:27px;background:#93d9d9;"></div><div style="position:absolute;left:455px;top:375px;width:2px;height:21px;background:#000;"></div><svg style="position:absolute;left:396px;top:353px" width="14" height="19" viewBox="0 0 14 19"><circle cx="6.9" cy="7" r="6.2" fill="#eea50a"/><rect x="3.3" y="10.5" width="7.4" height="3" fill="#eea50a"/><rect x="3.2" y="14.6" width="7.6" height="1.4" fill="#6f6f6f"/><rect x="4" y="16.6" width="6" height="1.8" fill="#a3a3a3"/></svg><div style="position:absolute;left:386px;top:143.08px;font-family:'Liberation Mono', monospace;font-size:16.6px;line-height:16.6px;color:#000;font-weight:400;white-space:pre;transform:scaleY(1.09);transform-origin:0 12.72px;"><span style="color:#000">&lt;!DOCTYPE </span><span style="color:#0033b3">html</span><span style="color:#000">&gt;</span></div><div style="position:absolute;left:386px;top:169.33px;font-family:'Liberation Mono', monospace;font-size:16.6px;line-height:16.6px;color:#000;font-weight:400;white-space:pre;transform:scaleY(1.09);transform-origin:0 12.72px;"><span style="color:#000">&lt;</span><span style="color:#0033b3">html</span><span style="color:#000"> </span><span style="color:#174ad4">lang</span><span style="color:#067d17">="en"</span><span style="color:#000">&gt;</span></div><div style="position:absolute;left:386px;top:195.58px;font-family:'Liberation Mono', monospace;font-size:16.6px;line-height:16.6px;color:#000;font-weight:400;white-space:pre;transform:scaleY(1.09);transform-origin:0 12.72px;"><span style="color:#000">&lt;</span><span style="color:#0033b3">head</span><span style="color:#000">&gt;</span></div><div style="position:absolute;left:386px;top:221.83px;font-family:'Liberation Mono', monospace;font-size:16.6px;line-height:16.6px;color:#000;font-weight:400;white-space:pre;transform:scaleY(1.09);transform-origin:0 12.72px;"><span style="color:#000">    &lt;</span><span style="color:#0033b3">meta</span><span style="color:#000"> </span><span style="color:#174ad4">charset</span><span style="color:#067d17">="UTF-8"</span><span style="color:#000">&gt;</span></div><div style="position:absolute;left:386px;top:248.08px;font-family:'Liberation Mono', monospace;font-size:16.6px;line-height:16.6px;color:#000;font-weight:400;white-space:pre;transform:scaleY(1.09);transform-origin:0 12.72px;"><span style="color:#000">    &lt;</span><span style="color:#0033b3">title</span><span style="color:#000">&gt;Title&lt;/</span><span style="color:#0033b3">title</span><span style="color:#000">&gt;</span></div><div style="position:absolute;left:386px;top:274.33px;font-family:'Liberation Mono', monospace;font-size:16.6px;line-height:16.6px;color:#000;font-weight:400;white-space:pre;transform:scaleY(1.09);transform-origin:0 12.72px;"><span style="color:#000">&lt;/</span><span style="color:#0033b3">head</span><span style="color:#000">&gt;</span></div><div style="position:absolute;left:386px;top:300.58px;font-family:'Liberation Mono', monospace;font-size:16.6px;line-height:16.6px;color:#000;font-weight:400;white-space:pre;transform:scaleY(1.09);transform-origin:0 12.72px;"><span style="color:#000">&lt;</span><span style="color:#0033b3">body</span><span style="color:#000">&gt;</span></div><div style="position:absolute;left:386px;top:326.83px;font-family:'Liberation Mono', monospace;font-size:16.6px;line-height:16.6px;color:#000;font-weight:400;white-space:pre;transform:scaleY(1.09);transform-origin:0 12.72px;"><span style="color:#000">&lt;</span><span style="color:#0033b3">h2</span><span style="color:#000">&gt;</span><span style="font-size:16px">这是首页</span>~<span style="font-size:16px">！！</span>~<span style="color:#000">&lt;/</span><span style="color:#0033b3">h2</span><span style="color:#000">&gt;</span></div><div style="position:absolute;left:386px;top:379.33px;font-family:'Liberation Mono', monospace;font-size:16.6px;line-height:16.6px;color:#000;font-weight:400;white-space:pre;transform:scaleY(1.09);transform-origin:0 12.72px;"><span style="color:#000">&lt;/</span><span style="color:#0033b3">body</span><span style="color:#000">&gt;</span></div><div style="position:absolute;left:386px;top:405.58px;font-family:'Liberation Mono', monospace;font-size:16.6px;line-height:16.6px;color:#000;font-weight:400;white-space:pre;transform:scaleY(1.09);transform-origin:0 12.72px;"><span style="color:#000">&lt;/</span><span style="color:#0033b3">html</span><span style="color:#000">&gt;</span></div><div style="position:absolute;left:179px;top:364px;width:130px;height:22px;background:transparent;box-sizing:border-box;border:1.5px solid #e8202a;"></div>
</body></html>
